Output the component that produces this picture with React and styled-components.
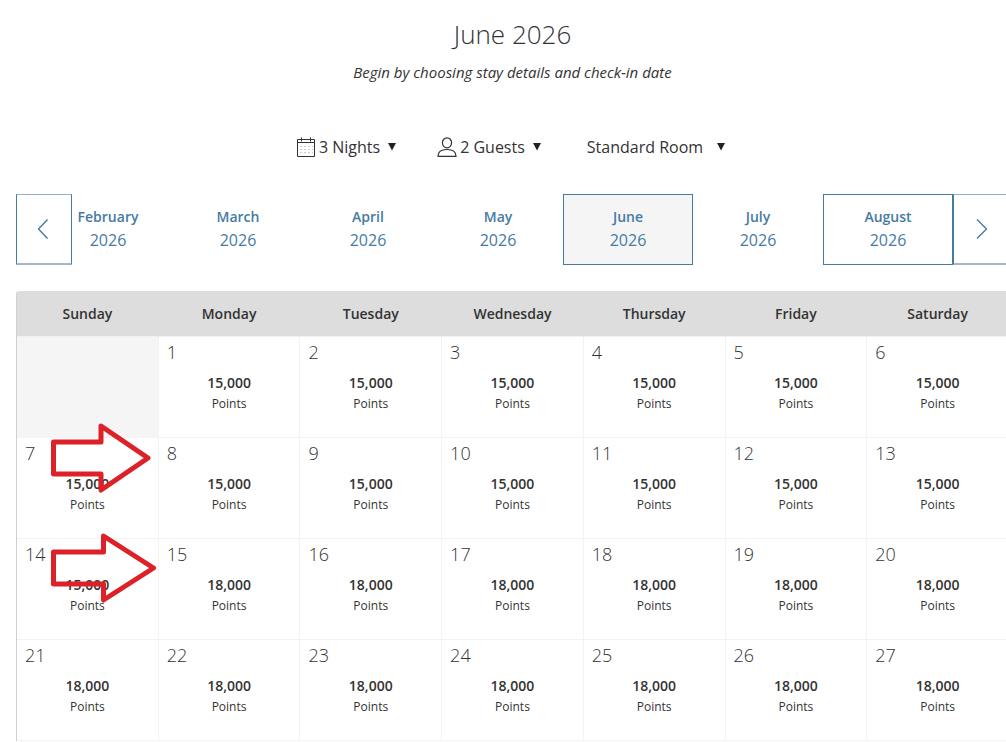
import { useState } from 'react'
import styled, { createGlobalStyle, css } from 'styled-components'

const GlobalStyle = createGlobalStyle`
  * {
    box-sizing: border-box;
  }

  body {
    margin: 0;
    background-color: #fff;
    color: #333;
    font-family: 'Open Sans', 'Noto Sans', sans-serif;
    overflow-x: hidden;
  }
`

const Page = styled.main`
  margin-left: 16px;
  margin-right: -3px;
  padding-top: 16px;
`

const Header = styled.header`
  text-align: center;
`

const Title = styled.h1`
  margin: 0;
  font-size: 26px;
  line-height: 36px;
  font-weight: 300;
`

const Subtitle = styled.p`
  margin: 10px 0 0;
  font-size: 15px;
  line-height: 20px;
  font-style: italic;
`

const Filters = styled.form`
  display: flex;
  justify-content: center;
  margin-top: 53px;
  padding-right: 4px;
  gap: 41px;
`

const Filter = styled.label`
  display: flex;
  align-items: center;
  height: 24px;
  gap: 8px;

  ${({ $wide }) =>
    $wide &&
    css`
      gap: 14px;
      margin-left: 5px;
    `}
`

const FilterValue = styled.span`
  display: flex;
  align-items: center;
  gap: 3px;
`

const Select = styled.select`
  appearance: none;
  field-sizing: content;
  margin: 0;
  padding: 0;
  border: 0;
  background: none;
  color: inherit;
  font-family: inherit;
  font-size: 16px;
  line-height: 24px;
  cursor: pointer;
`

const Months = styled.nav`
  display: flex;
  height: 71px;
  margin-top: 35px;
`

const MonthList = styled.div`
  flex: 1;
  min-width: 0;
  display: flex;
  justify-content: flex-end;
  overflow: hidden;
`

const ArrowButton = styled.button`
  flex: none;
  display: flex;
  align-items: center;
  justify-content: center;
  width: 56px;
  padding: 0;
  border: 1px solid #457b9f;
  border-top-color: #8fb0c6;
  border-bottom: 2px solid #a4b8c8;
  background-color: #fff;
  color: #457b9f;
  cursor: pointer;
`

const MonthButton = styled.button`
  flex: none;
  width: 130px;
  padding: 0 0 1px;
  border: 1px solid transparent;
  background-color: transparent;
  color: #457ba3;
  font-family: inherit;
  cursor: pointer;

  ${({ $outlined }) => $outlined && 'border-color: #457b9f;'}
  ${({ $selected }) =>
    $selected &&
    css`
      border-color: #457b9f;
      background-color: #f5f5f5;
    `}
`

const MonthName = styled.span`
  display: block;
  font-size: 14px;
  line-height: 22px;
  font-weight: 600;
`

const MonthYear = styled.span`
  display: block;
  font-size: 16px;
  line-height: 24px;
`

const Calendar = styled.table`
  width: 100%;
  margin-top: 26px;
  table-layout: fixed;
  border-collapse: separate;
  border-spacing: 0;
  border-left: 1px solid #d0d0d0;
  border-top-left-radius: 3px;
`

const Weekday = styled.th`
  height: 46px;
  padding: 0;
  border-right: 1px solid #ddd;
  border-bottom: 1px solid #f1f1f1;
  background-color: #ddd;
  font-size: 14px;
  font-weight: 600;

  &:first-child {
    border-top-left-radius: 3px;
  }
`

const DayCell = styled.td`
  position: relative;
  height: 101px;
  padding: 3px 0 0;
  vertical-align: top;
  border-right: 1px solid #f3f3f3;
  border-bottom: 1px solid #f3f3f3;
  background-color: ${({ $empty }) => ($empty ? '#f5f5f5' : 'transparent')};
`

const DayNumber = styled.div`
  padding-left: 8px;
  font-size: 18px;
  line-height: 24px;
  font-weight: 300;
`

const Price = styled.div`
  margin-top: 9px;
  font-size: 14px;
  line-height: 20px;
  font-weight: 600;
  text-align: center;
`

const Unit = styled.div`
  font-size: 12px;
  line-height: 22px;
  text-align: center;
`

// drawn over the cell and its neighbours
const Marker = styled.svg`
  position: absolute;
  z-index: 1;
  left: 33px;
  top: ${({ $top }) => $top}px;
  overflow: visible;
  pointer-events: none;
`

const MONTHS = ['February', 'March', 'April', 'May', 'June', 'July', 'August']

const WEEKDAYS = [
  'Sunday',
  'Monday',
  'Tuesday',
  'Wednesday',
  'Thursday',
  'Friday',
  'Saturday',
]

// June 2026 starts on a Monday
const WEEKS = [
  [null, 1, 2, 3, 4, 5, 6],
  [7, 8, 9, 10, 11, 12, 13],
  [14, 15, 16, 17, 18, 19, 20],
  [21, 22, 23, 24, 25, 26, 27],
]

const MARKERS = {
  7: { top: -15, width: 100, path: 'M3.5 19H51V3L98 35L51 67V51H3.5Z' },
  14: { top: -6, width: 106, path: 'M3.5 19H53.5V3L103.5 35L53.5 67V51H3.5Z' },
}

const getPrice = (day) => (day < 15 ? '15,000' : '18,000')

const CalendarIcon = () => (
  <svg width="20" height="20" viewBox="0 0 20 20" fill="none" stroke="#333">
    <path d="M1.5 2.5H18.5V19.5H1.5Z M1.5 5.5H18.5" />
    <path d="M5.5 0.5V4.5M14.5 0.5V4.5" />
    <path
      d="M4 9.5H17M4 12.5H17M4 15.5H17"
      stroke="#ccc"
      strokeDasharray="2 2"
    />
  </svg>
)

const GuestIcon = () => (
  <svg
    width="20"
    height="20"
    viewBox="0 0 20 20"
    fill="none"
    stroke="#333"
    strokeWidth="1.2"
  >
    <ellipse cx="10" cy="5.8" rx="4.6" ry="5" />
    <path d="M1 19.3C1 15 4.5 12.5 10 12.5S19 15 19 19.3Z" />
  </svg>
)

const Caret = () => (
  <svg width="8" height="8" viewBox="0 0 8 8" fill="#222">
    <path d="M0 0H8L4 7.5Z" />
  </svg>
)

const Chevron = ({ path }) => (
  <svg
    width="12"
    height="22"
    viewBox="0 0 12 22"
    fill="none"
    stroke="currentColor"
    strokeWidth="1.4"
  >
    <path d={path} />
  </svg>
)

const App = () => {
  const [selected, setSelected] = useState('June')

  return (
    <>
      <GlobalStyle />
      <Page>
        <Header>
          <Title>{selected} 2026</Title>
          <Subtitle>Begin by choosing stay details and check-in date</Subtitle>
        </Header>

        <Filters>
          <Filter>
            <FilterValue>
              <CalendarIcon />
              <Select aria-label="Nights">
                <option>3 Nights</option>
              </Select>
            </FilterValue>
            <Caret />
          </Filter>
          <Filter>
            <FilterValue>
              <GuestIcon />
              <Select aria-label="Guests">
                <option>2 Guests</option>
              </Select>
            </FilterValue>
            <Caret />
          </Filter>
          <Filter $wide>
            <Select aria-label="Room type">
              <option>Standard Room</option>
            </Select>
            <Caret />
          </Filter>
        </Filters>

        <Months>
          <ArrowButton type="button" aria-label="Previous months">
            <Chevron path="M9.5 1.5L0.5 11L9.5 20.5" />
          </ArrowButton>
          <MonthList>
            {MONTHS.map((month) => (
              <MonthButton
                key={month}
                type="button"
                $selected={month === selected}
                $outlined={month === 'August'}
                onClick={() => setSelected(month)}
              >
                <MonthName>{month}</MonthName>
                <MonthYear>2026</MonthYear>
              </MonthButton>
            ))}
          </MonthList>
          <ArrowButton type="button" aria-label="Next months">
            <Chevron path="M2 1.5L11.5 11L2 20.5" />
          </ArrowButton>
        </Months>

        <Calendar>
          <thead>
            <tr>
              {WEEKDAYS.map((weekday) => (
                <Weekday key={weekday} scope="col">
                  {weekday}
                </Weekday>
              ))}
            </tr>
          </thead>
          <tbody>
            {WEEKS.map((week, index) => (
              <tr key={index}>
                {week.map((day, column) => {
                  if (!day) return <DayCell key={column} $empty />

                  const marker = MARKERS[day]
                  return (
                    <DayCell key={column}>
                      <DayNumber>{day}</DayNumber>
                      <Price>{getPrice(day)}</Price>
                      <Unit>Points</Unit>
                      {marker && (
                        <Marker
                          $top={marker.top}
                          width={marker.width}
                          height="70"
                          fill="none"
                          stroke="#dc2128"
                          strokeWidth="5"
                          strokeLinejoin="round"
                        >
                          <path d={marker.path} />
                        </Marker>
                      )}
                    </DayCell>
                  )
                })}
              </tr>
            ))}
          </tbody>
        </Calendar>
      </Page>
    </>
  )
}

export default App
